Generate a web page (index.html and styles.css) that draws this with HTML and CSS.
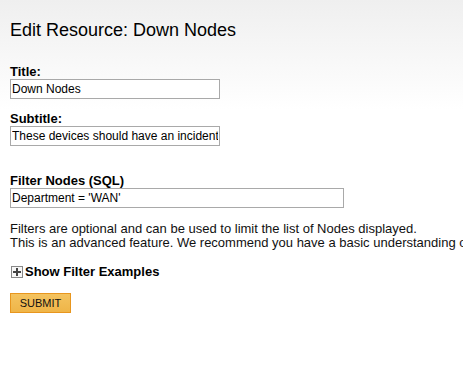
FILE: index.html
```html
<!DOCTYPE html>
<html lang="en">
<head>
    <meta charset="UTF-8">
    <meta name="viewport" content="width=device-width, initial-scale=1.0">
    <title>Edit Resource</title>
    <link rel="stylesheet" href="styles.css">
</head>
<body>
    <h1>Edit Resource: Down Nodes</h1>
    <form class="resource-form" onsubmit="return false;">
        <div class="field">
            <label for="title">Title:</label>
            <input class="text-input" id="title" type="text" value="Down Nodes">
        </div>
        <div class="field">
            <label for="subtitle">Subtitle:</label>
            <input class="text-input" id="subtitle" type="text" value="These devices should have an incident ticket open">
        </div>
        <div class="field field-filter">
            <label for="filter">Filter Nodes (SQL)</label>
            <input class="text-input wide" id="filter" type="text" value="Department = 'WAN'">
        </div>
        <p class="help">
            Filters are optional and can be used to limit the list of Nodes displayed.<br>
            This is an advanced feature. We recommend you have a basic understanding of SQL before using it.
        </p>
        <div class="examples">
            <span class="expander"></span>Show Filter Examples
        </div>
        <button class="submit" type="submit">SUBMIT</button>
    </form>
</body>
</html>
```

FILE: styles.css
```css
html {
    background: #fff;
}
body {
    margin: 0;
    padding: 0 10px;
    font-family: "Liberation Sans", Arial, sans-serif;
    color: #111;
    background: linear-gradient(to bottom, #efefef 0, #ffffff 110px) no-repeat;
    min-height: 370px;
    overflow: hidden;
    white-space: nowrap;
}
h1 {
    margin: 0;
    padding-top: 20px;
    font-size: 18px;
    font-weight: normal;
    line-height: 20px;
    color: #000;
}
.resource-form {
    padding-top: 24px;
}
.field {
    display: flex;
    flex-direction: column;
    align-items: flex-start;
    margin-bottom: 12px;
}
.field-filter {
    margin-top: 27px;
}
label {
    font-size: 13px;
    font-weight: bold;
    line-height: 15px;
    color: #000;
}
.text-input {
    box-sizing: border-box;
    width: 210px;
    height: 20px;
    margin: 0;
    padding: 0 1px;
    border: 1px solid #a9a9a9;
    background: #fff;
    font-family: "Liberation Sans", Arial, sans-serif;
    font-size: 12px;
    color: #000;
    outline: none;
}
.text-input.wide {
    width: 334px;
}
.help {
    margin: 14px 0 0;
    font-size: 13px;
    line-height: 14px;
    color: #111;
}
.examples {
    display: flex;
    align-items: center;
    margin-top: 14px;
    font-size: 13px;
    font-weight: bold;
    line-height: 15px;
    color: #000;
}
.expander {
    position: relative;
    box-sizing: border-box;
    width: 12px;
    height: 12px;
    margin-left: 1px;
    margin-right: 2px;
    border: 1px solid #888;
    background: #f7f7f7;
}
.expander::before,
.expander::after {
    content: "";
    position: absolute;
    background: #444;
}
.expander::before {
    left: 1px;
    top: 4px;
    width: 8px;
    height: 2px;
}
.expander::after {
    left: 4px;
    top: 1px;
    width: 2px;
    height: 8px;
}
.submit {
    display: block;
    box-sizing: border-box;
    width: 61px;
    height: 20px;
    margin-top: 14px;
    padding: 0;
    border: 1px solid #e8961e;
    background: linear-gradient(to bottom, #f4c35f, #efb548);
    font-family: "Liberation Sans", Arial, sans-serif;
    font-size: 11px;
    color: #111;
}
```
